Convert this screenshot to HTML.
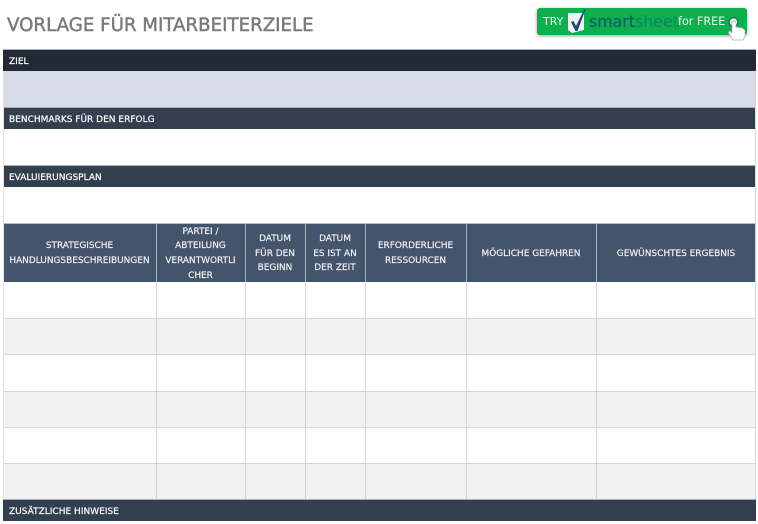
<!DOCTYPE html>
<html><head><meta charset="utf-8">
<style>
html,body{margin:0;padding:0;background:#fff;}
#p{position:relative;width:758px;height:524px;overflow:hidden;background:#fff;font-family:"DejaVu Sans","Liberation Sans",sans-serif;filter:blur(.25px);}
.a{position:absolute;}
.bar{position:absolute;left:3px;width:753px;height:21px;border-top:1px solid #a9afb8;color:#fff;font-size:9px;line-height:25px;text-indent:6px;white-space:nowrap;overflow:hidden;-webkit-text-stroke:.2px #fff;}
.h{position:absolute;top:224px;height:58px;padding-top:2px;box-sizing:border-box;background:#44546a;color:#eef0f3;font-size:8.95px;line-height:14.6px;text-align:center;display:flex;align-items:center;justify-content:center;white-space:nowrap;-webkit-text-stroke:.2px #eef0f3;}
.vl{position:absolute;top:282px;height:218px;width:1px;background:#d4d4d4;}
.hs{position:absolute;top:224px;height:58px;width:1px;background:#aab2bd;}
.r{position:absolute;left:3px;width:753px;border-top:1px solid #d6d6d6;box-sizing:border-box;}
</style></head><body>
<div id="p">
<div class="a" style="left:7px;top:14px;font-size:18.2px;line-height:23px;color:#7b7b7b;white-space:nowrap;-webkit-text-stroke:.45px #7b7b7b;">VORLAGE FÜR MITARBEITERZIELE</div>

<div class="a" style="left:537px;top:8px;width:210px;height:27px;background:#0fae4f;border-radius:3px;box-shadow:0 1px 3px rgba(0,0,0,.4);"></div>
<div class="a" style="left:543px;top:15px;font-size:11px;line-height:14px;color:#e4f5ea;">TRY</div>
<svg class="a" style="left:566px;top:8px" width="22" height="26" viewBox="0 0 22 26">
<path d="M2 5H18V22L6 25L2 22Z" fill="#eef2f3"/>
<path d="M5 14L7.500 13L10 18L18.500 1L19.500 1.500L11.500 23H9.500Z" fill="#1d4a6e"/>
</svg>
<div class="a" style="left:589px;top:12px;font-size:15.8px;line-height:19px;white-space:nowrap;"><span style="color:#155f6c;-webkit-text-stroke:.35px #155f6c">smart</span><span style="color:#0f8460">sheet</span></div>
<div class="a" style="left:678px;top:15px;font-size:11.2px;line-height:14px;color:#e8f7ee;white-space:nowrap;">for FREE</div>
<svg class="a" style="left:726px;top:14px" width="24" height="30" viewBox="0 0 24 30">
<circle cx="7.5" cy="8" r="4.500" fill="#e0f2e8" stroke="#1f6f5c" stroke-width="1.400"/>
<path d="M6 9V19L4 17L2 18L7 26H17L19 22V16L16 14L10 13V9C10 7 6 7 6 9Z" fill="#fff"/>
<path d="M6 9V19L4 17L2 18L7 26H17L19 22V16L16 14L10 13V9C10 7 6 7 6 9Z" fill="none" stroke="#9fb3aa" stroke-width=".7"/>
</svg>

<div class="bar" style="top:49px;background:#222b35;">ZIEL</div>
<div class="a" style="left:3px;top:71px;width:753px;height:36px;background:#d6dce5;"></div>
<div class="bar" style="top:107px;background:#333f4f;">BENCHMARKS FÜR DEN ERFOLG</div>
<div class="bar" style="top:165px;background:#333f4f;">EVALUIERUNGSPLAN</div>

<div class="h" style="left:3px;width:153px;"><span>STRATEGISCHE<br>HANDLUNGSBESCHREIBUNGEN</span></div>
<div class="h" style="left:156px;width:89px;"><span>PARTEI /<br>ABTEILUNG<br>VERANTWORTLI<br>CHER</span></div>
<div class="h" style="left:245px;width:60px;"><span>DATUM<br>FÜR DEN<br>BEGINN</span></div>
<div class="h" style="left:305px;width:60px;"><span>DATUM<br>ES IST AN<br>DER ZEIT</span></div>
<div class="h" style="left:365px;width:101px;"><span>ERFORDERLICHE<br>RESSOURCEN</span></div>
<div class="h" style="left:466px;width:130px;"><span>MÖGLICHE GEFAHREN</span></div>
<div class="h" style="left:596px;width:160px;"><span>GEWÜNSCHTES ERGEBNIS</span></div>
<div class="a" style="left:3px;top:223px;width:753px;height:1px;background:#b8bdc4;"></div>
<div class="hs" style="left:156px"></div><div class="hs" style="left:245px"></div><div class="hs" style="left:305px"></div><div class="hs" style="left:365px"></div><div class="hs" style="left:466px"></div><div class="hs" style="left:596px"></div>

<div class="r" style="top:318px;height:36px;background:#f2f2f2;"></div>
<div class="r" style="top:354px;height:37px;background:#fff;"></div>
<div class="r" style="top:391px;height:36px;background:#f2f2f2;"></div>
<div class="r" style="top:427px;height:36px;background:#fff;"></div>
<div class="r" style="top:463px;height:37px;background:#f2f2f2;"></div>
<div class="vl" style="left:156px"></div><div class="vl" style="left:245px"></div><div class="vl" style="left:305px"></div><div class="vl" style="left:365px"></div><div class="vl" style="left:466px"></div><div class="vl" style="left:596px"></div>
<div class="vl" style="left:3px;top:71px;height:429px;background:#e2e2e2"></div>
<div class="vl" style="left:755px;top:71px;height:429px;background:#d8d8d8"></div>

<div class="bar" style="top:499px;background:#333f4f;">ZUSÄTZLICHE HINWEISE</div>
</div>
</body></html>
